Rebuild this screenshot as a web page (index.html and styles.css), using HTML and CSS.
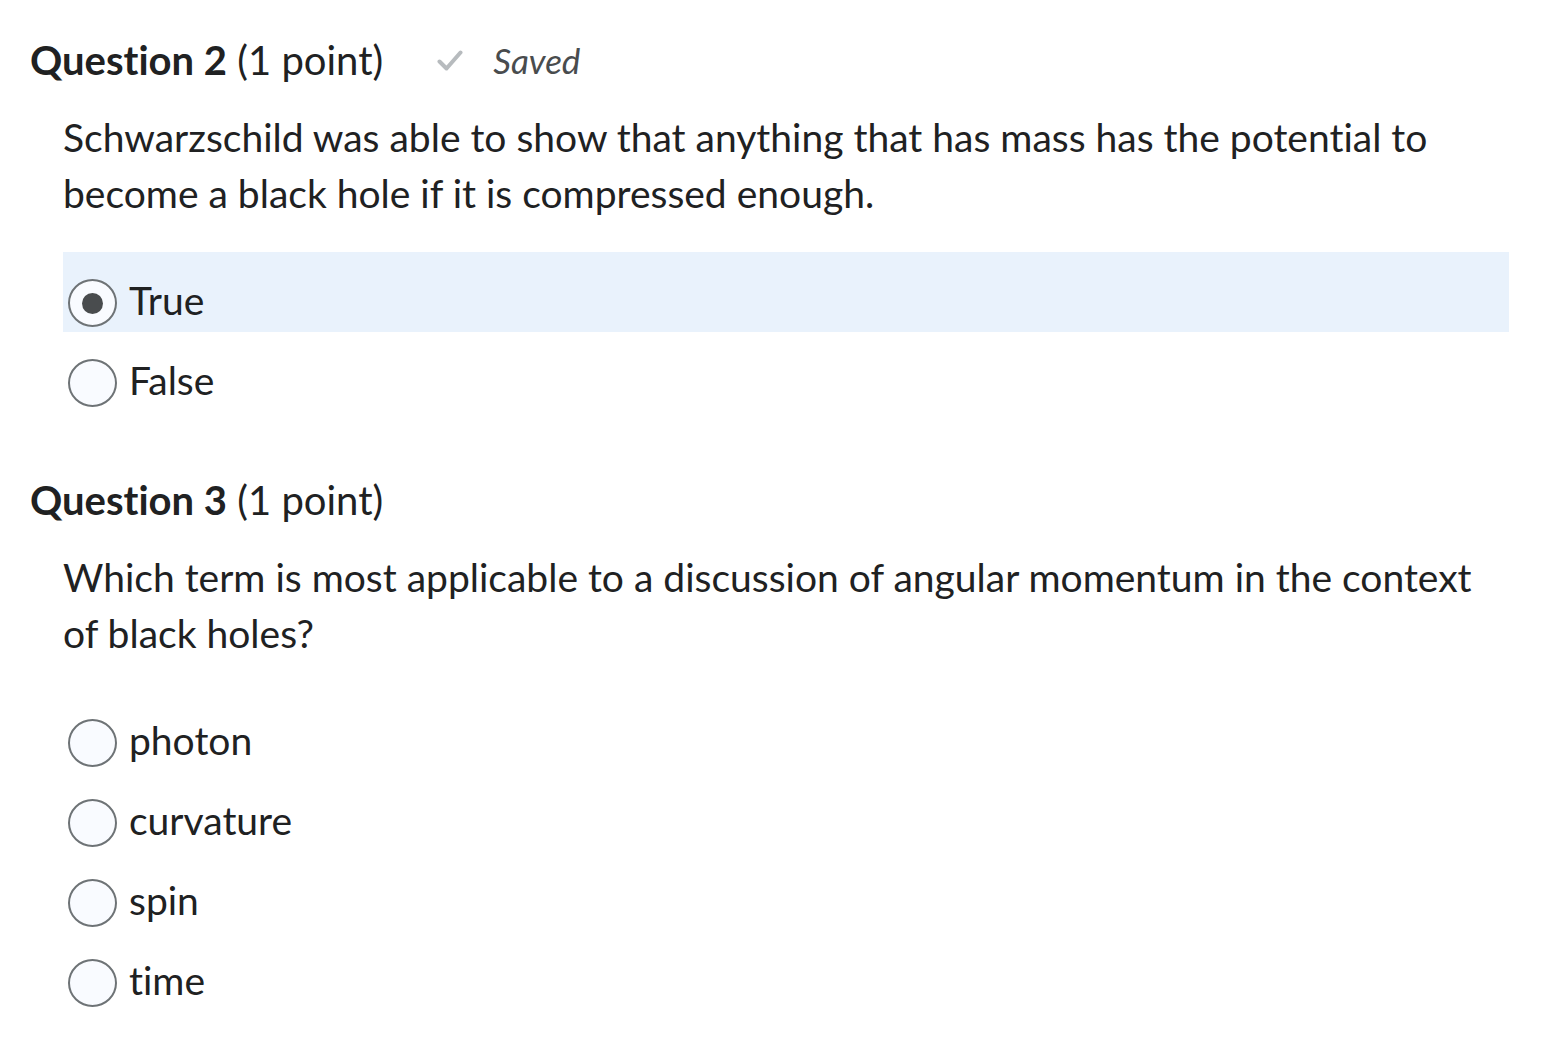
FILE: index.html
```html
<!DOCTYPE html>
<html lang="en">
<head>
<meta charset="utf-8">
<title>Quiz</title>
<link rel="stylesheet" href="styles.css">
</head>
<body>
<main class="quiz">
  <section class="question">
    <header class="q-head">
      <h2 class="q-title"><strong>Question 2</strong> (1 point)</h2>
      <span class="saved">
        <svg class="check" viewBox="0 0 26 25" width="26" height="25" aria-hidden="true"><path d="M2.5 13.5 L9.5 20.5 L23.5 4.5" fill="none" stroke="#b7bbbe" stroke-width="4" stroke-linecap="round" stroke-linejoin="round"/></svg>
        <em>Saved</em>
      </span>
    </header>
    <p class="q-text">Schwarzschild was able to show that anything that has mass has the potential to become a black hole if it is compressed enough.</p>
    <div class="options">
      <label class="option selected"><span class="radio checked"></span><span class="opt-text">True</span></label>
      <label class="option"><span class="radio"></span><span class="opt-text">False</span></label>
    </div>
  </section>
  <section class="question">
    <header class="q-head">
      <h2 class="q-title"><strong>Question 3</strong> (1 point)</h2>
    </header>
    <p class="q-text">Which term is most applicable to a discussion of angular momentum in the context of black holes?</p>
    <div class="options">
      <label class="option"><span class="radio"></span><span class="opt-text">photon</span></label>
      <label class="option"><span class="radio"></span><span class="opt-text">curvature</span></label>
      <label class="option"><span class="radio"></span><span class="opt-text">spin</span></label>
      <label class="option"><span class="radio"></span><span class="opt-text">time</span></label>
    </div>
  </section>
</main>
</body>
</html>
```
FILE: styles.css
```css
html, body {
  margin: 0;
  padding: 0;
  background: #ffffff;
}
body {
  font-family: Lato, "Noto Sans", sans-serif;
  color: #202122;
  font-variant-ligatures: none;
}
.quiz {
  padding: 32px 37px 0 30px;
  display: flex;
  flex-direction: column;
  gap: 60px;
}
.question {
  display: flex;
  flex-direction: column;
}
.q-head {
  display: flex;
  align-items: center;
  gap: 54px;
  height: 56px;
}
.q-title {
  margin: 0;
  font-size: 40px;
  font-weight: 400;
  line-height: 56px;
}
.q-title strong {
  font-weight: 700;
}
.saved {
  display: flex;
  align-items: center;
  gap: 30px;
  color: #494c4e;
  font-size: 35px;
}
.saved em {
  font-style: italic;
}
.check {
  display: block;
}
.q-text {
  margin: 21px 0 0 33px;
  font-size: 39px;
  line-height: 56px;
}
.options {
  margin: 31px 0 0 33px;
  display: flex;
  flex-direction: column;
}
.option {
  height: 80px;
  display: flex;
  align-items: center;
  gap: 12px;
  padding-left: 5px;
  box-sizing: border-box;
  font-size: 39px;
}
.option.selected {
  background: #e9f2fc;
}
.radio {
  width: 49px;
  height: 48px;
  box-sizing: border-box;
  border: 2px solid #6e7376;
  border-radius: 50%;
  background: #f9fbff;
  margin-top: 22px;
  flex: none;
  display: flex;
  align-items: center;
  justify-content: center;
}
.radio.checked::after {
  content: "";
  width: 21px;
  height: 21px;
  border-radius: 50%;
  background: #494c4e;
}
.opt-text {
  margin-top: 16px;
  line-height: 48px;
}
```
